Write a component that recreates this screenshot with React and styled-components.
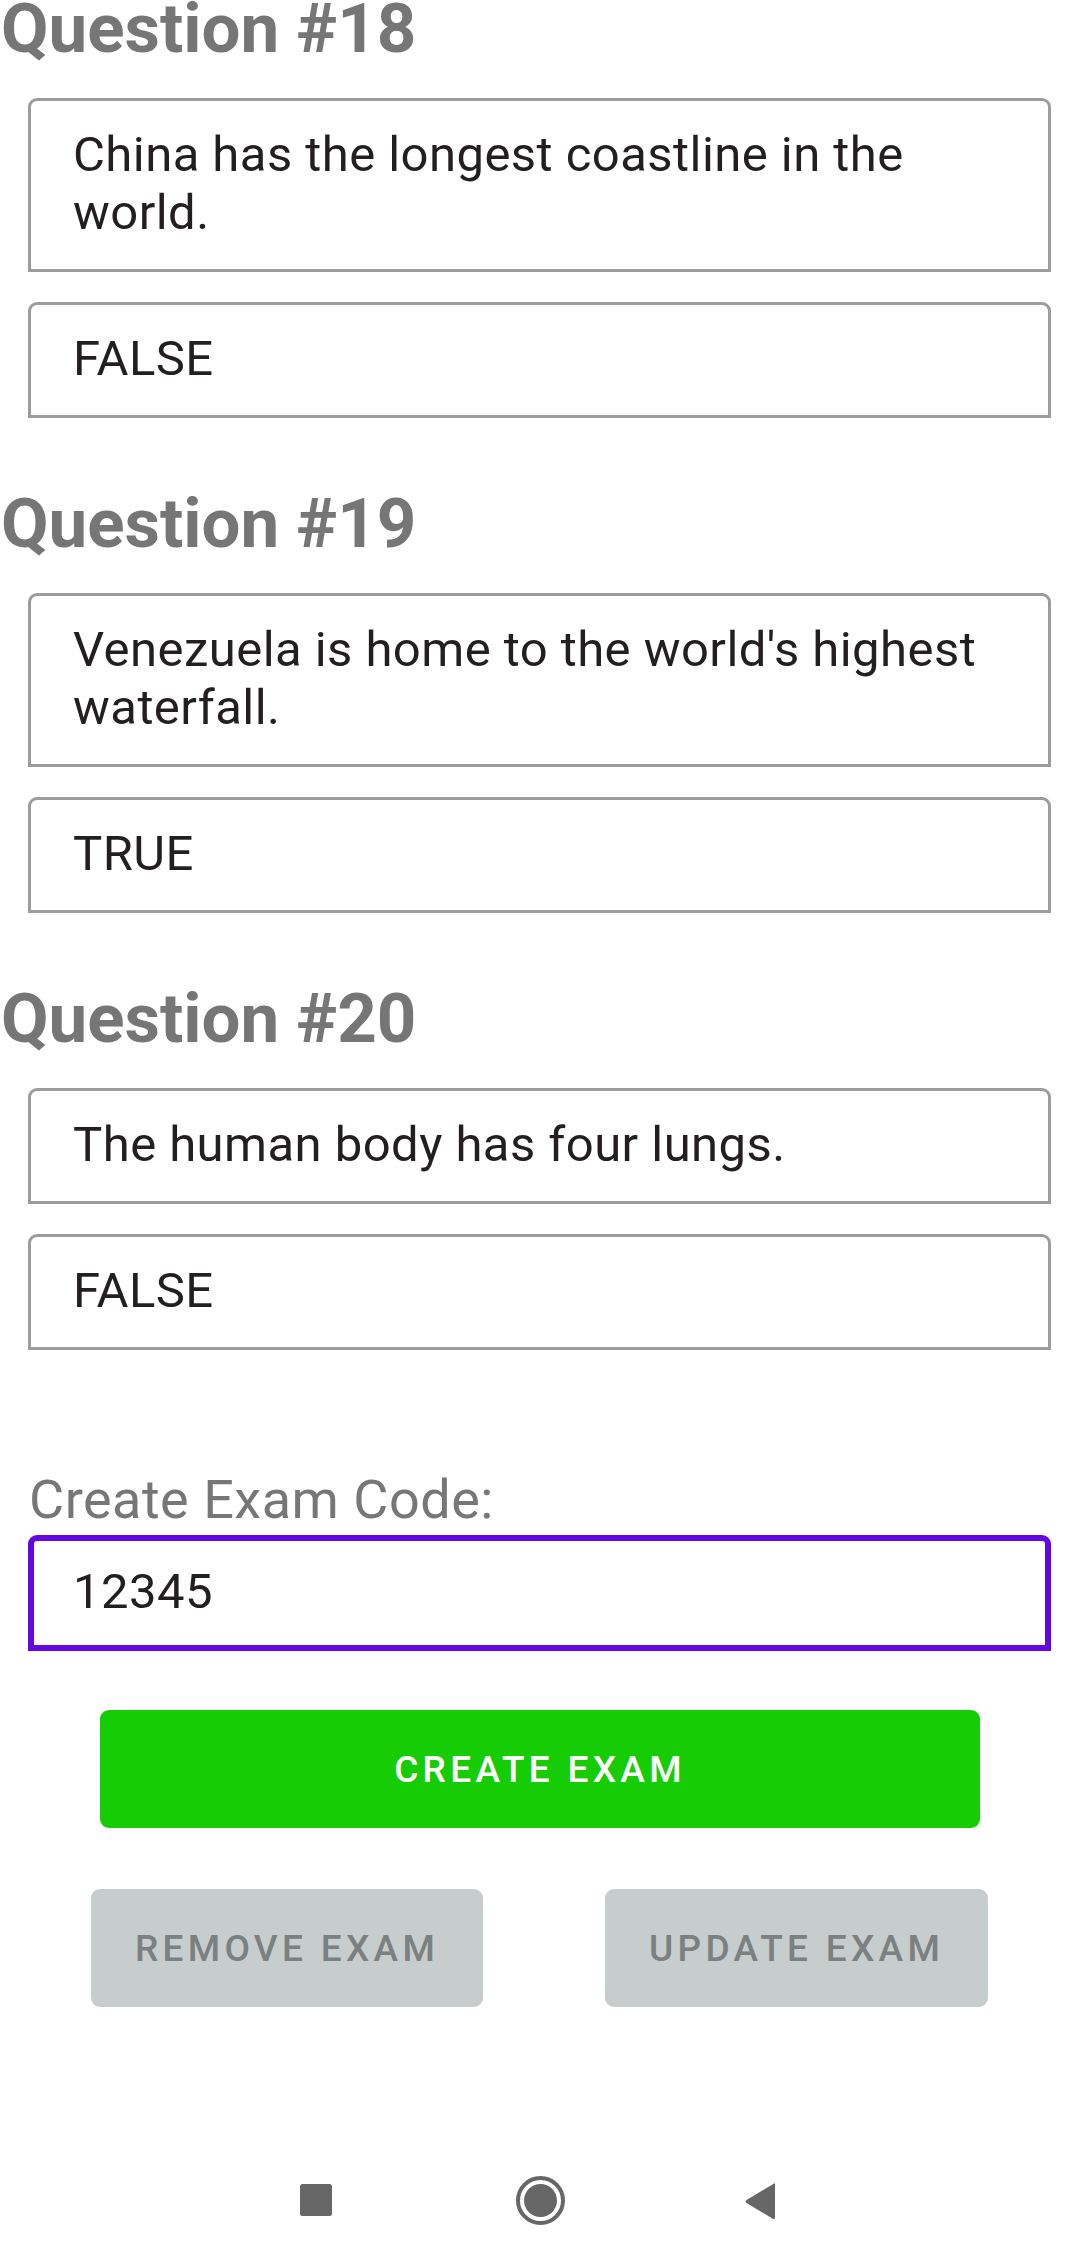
import React from "react";
import styled, { createGlobalStyle } from "styled-components";

const GlobalStyle = createGlobalStyle`
  html, body {
    margin: 0;
    padding: 0;
    background: #ffffff;
  }
  body {
    font-family: Roboto, "Noto Sans", Arial, sans-serif;
    -webkit-font-smoothing: antialiased;
  }
  * { box-sizing: border-box; }
`;

const Page = styled.div`
  display: flex;
  flex-direction: column;
  min-height: 100vh;
  width: 1080px;
  overflow: hidden;
  background: #ffffff;
`;

const Content = styled.main`
  display: flex;
  flex-direction: column;
  margin-top: -11px;
`;

const Section = styled.section`
  display: flex;
  flex-direction: column;
  gap: 30px;
  margin-bottom: 66px;
`;

const Heading = styled.h2`
  margin: 0 0 -1px 0;
  padding: 0 0 0 1px;
  font-family: Roboto, Arial, sans-serif;
  font-weight: 700;
  font-size: 69px;
  line-height: 80px;
  color: #767676;
`;

const Field = styled.div`
  margin: 0 29px 0 28px;
  padding: 25px 40px 27px 42px;
  border: ${(p) => (p.$focused ? "6px solid #6407e0" : "3px solid #9c9c9c")};
  border-radius: 9px 9px 0 0;
  font-family: Roboto, Arial, sans-serif;
  font-size: 49px;
  line-height: 58px;
  letter-spacing: 0.45px;
  color: #231e1f;
  background: #ffffff;
  ${(p) => (p.$focused ? "padding-top: 22px; padding-bottom: 24px; padding-left: 39px;" : "")}
`;

const CodeBlock = styled.div`
  display: flex;
  flex-direction: column;
  margin-top: 53px;
`;

const Label = styled.label`
  margin: 0 0 4px 29px;
  font-family: Roboto, Arial, sans-serif;
  font-size: 54px;
  line-height: 62px;
  letter-spacing: 0.5px;
  color: #777777;
`;

const Actions = styled.div`
  display: flex;
  flex-direction: column;
  gap: 61px;
  margin-top: 59px;
`;

const Button = styled.button`
  display: inline-flex;
  align-items: center;
  justify-content: center;
  height: 118px;
  padding: 0 44px;
  border: none;
  border-radius: 9px;
  font-family: Roboto, Arial, sans-serif;
  font-weight: 500;
  font-size: 37px;
  letter-spacing: 4.3px;
  text-transform: uppercase;
  background: ${(p) => (p.$primary ? "#15cc05" : "#c7cccc")};
  color: ${(p) => (p.$primary ? "#ffffff" : "#7b8080")};
  cursor: pointer;
`;

const PrimaryButton = styled(Button)`
  width: 880px;
  margin-left: 100px;
`;

const SecondaryRow = styled.div`
  display: flex;
  gap: 122px;
  padding-left: 91px;
`;

const NavBar = styled.nav`
  margin-top: auto;
  height: 126px;
  display: flex;
  justify-content: center;
  align-items: center;
  background: #ffffff;
`;

const NavSlot = styled.div`
  width: 220px;
  display: flex;
  justify-content: center;
  align-items: center;
`;

const questions = [
  { n: 18, q: "China has the longest coastline in the world.", a: "FALSE" },
  { n: 19, q: "Venezuela is home to the world's highest waterfall.", a: "TRUE" },
  { n: 20, q: "The human body has four lungs.", a: "FALSE" },
];

export default function App() {
  return (
    <>
      <GlobalStyle />
      <Page>
        <Content>
          {questions.map((item) => (
            <Section key={item.n}>
              <Heading>Question #{item.n}</Heading>
              <Field>{item.q}</Field>
              <Field>{item.a}</Field>
            </Section>
          ))}
          <CodeBlock>
            <Label>Create Exam Code:</Label>
            <Field $focused>12345</Field>
          </CodeBlock>
          <Actions>
            <PrimaryButton $primary>Create Exam</PrimaryButton>
            <SecondaryRow>
              <Button>Remove Exam</Button>
              <Button>Update Exam</Button>
            </SecondaryRow>
          </Actions>
        </Content>
        <NavBar>
          <NavSlot>
            <svg width="56" height="56" viewBox="0 0 56 56">
              <rect x="8" y="12" width="32" height="32" rx="2.5" fill="#666666" />
            </svg>
          </NavSlot>
          <NavSlot>
            <svg width="56" height="56" viewBox="0 0 56 56">
              <circle cx="28.5" cy="28.5" r="22.5" fill="none" stroke="#666666" strokeWidth="4" />
              <circle cx="28.5" cy="28.5" r="16.5" fill="#666666" />
            </svg>
          </NavSlot>
          <NavSlot>
            <svg width="56" height="56" viewBox="0 0 56 56">
              <path
                d="M43 11.5 L43 45.5 Q43 48 40.8 46.8 L14.5 31 Q12.5 29.5 14.5 28 L40.8 12.3 Q43 11 43 11.5 Z"
                fill="#666666"
              />
            </svg>
          </NavSlot>
        </NavBar>
      </Page>
    </>
  );
}
